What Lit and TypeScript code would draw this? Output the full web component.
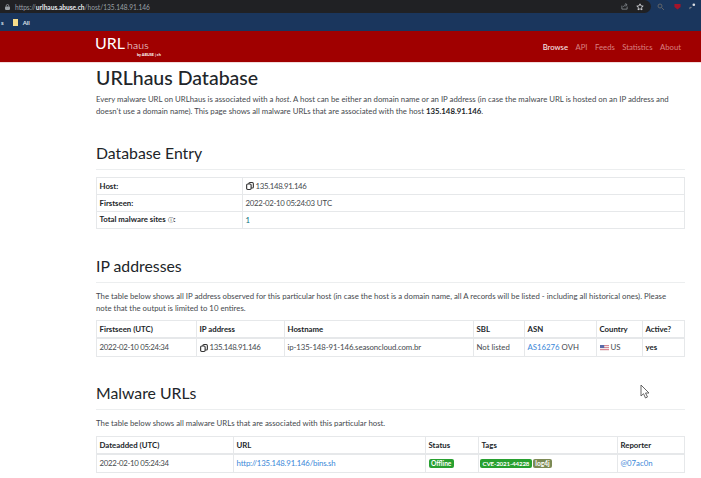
import { LitElement, html, css, svg } from 'lit';
import { customElement } from 'lit/decorators.js';

const copyIcon = html`<svg class="copy" viewBox="0 0 10 10" width="8" height="8">
  <rect x="3.6" y="0.7" width="5.6" height="6.8" rx="1.4" fill="none" stroke="#333" stroke-width="1.4"></rect>
  <rect x="0.8" y="2.5" width="5.6" height="6.8" rx="1.4" fill="#fff" stroke="#333" stroke-width="1.4"></rect>
</svg>`;

const flag = html`<svg class="flag" viewBox="0 0 9 6" width="9" height="6">
  <rect width="9" height="6" fill="#d98a94"></rect>
  ${[1, 3, 5].map((y) => svg`<rect y=${y} width="9" height="1" fill="#f1e6e8"></rect>`)}
  <rect width="4.2" height="3" fill="#5a6aa8"></rect>
</svg>`;

@customElement('app-root')
export class AppRoot extends LitElement {
  static styles = css`
    :host {
      display: block;
      height: 478px;
      overflow: hidden;
      position: relative;
      background: #fff;
      font-family: "Lato", "Open Sans", sans-serif;
      font-size: 7.8px;
      color: #45494e;
    }
    .top { height: 31px; background: #1a365d; }
    .toolbar { height: 13px; display: flex; align-items: center; }
    .omnibox {
      width: 651px;
      height: 13px;
      flex: none;
      box-sizing: border-box;
      background: #202124;
      border-radius: 0 7px 7px 0;
      display: flex;
      align-items: center;
      padding: 0 4px 0 5px;
      color: #9aa0a6;
      font-size: 6.6px;
    }
    .lock { margin-right: 5px; }
    .omnibox b { color: #e8eaed; font-weight: 700; }
    .page-tools { margin-left: auto; display: flex; align-items: center; gap: 8px; padding-right: 3px; }
    .ext-tools { flex: 1; display: flex; align-items: center; justify-content: space-between; padding: 0 5px 0 6px; }
    .bookmarks {
      height: 18px;
      display: flex;
      align-items: center;
      color: #dfe5ee;
      font-size: 6px;
      font-weight: 700;
      padding-left: 1px;
    }
    .bookmarks .folder { width: 5px; height: 7px; background: #f6dd8a; margin: 0 5px 0 9px; }
    .nav {
      height: 32px;
      background: #a00000;
      padding: 0 20px 0 95px;
      display: flex;
      align-items: center;
      border-bottom: 1px solid #f2dcdc;
      box-sizing: border-box;
    }
    .logo { color: #fff; line-height: 1; position: relative; width: 80px; height: 24px; }
    .logo .url { font-size: 16px; font-weight: 400; }
    .logo .haus { font-size: 10.5px; font-weight: 300; margin-left: 2px; letter-spacing: 0.2px; }
    .logo .by { position: absolute; left: 42px; top: 18px; font-size: 3.8px; font-weight: 700; white-space: nowrap; }
    .menu { margin-left: auto; display: flex; gap: 7.5px; font-size: 7.7px; color: #d98080; }
    .menu .on { color: #f6e4e4; font-weight: 500; }
    .main { padding: 3px 16px 0 96px; }
    h1 { font-size: 19.5px; font-weight: 500; color: #212529; margin: 0; line-height: 24px; }
    p { margin: 0; line-height: 12.4px; }
    .intro { margin-top: 3px; }
    p b { font-weight: 700; color: #212529; }
    h2 {
      font-size: 15.8px;
      font-weight: 400;
      color: #212529;
      margin: 0;
      line-height: 20px;
      padding-bottom: 6px;
      border-bottom: 1px solid #eceeef;
    }
    .sec-a { margin-top: 25px; }
    .sec-b { margin-top: 27px; }
    .sec-c { margin-top: 26px; }
    table { width: 589px; border-collapse: collapse; table-layout: fixed; }
    td, th {
      border: 1px solid #e6e8ea;
      padding: 0 2.5px;
      height: 16px;
      text-align: left;
      white-space: nowrap;
      overflow: hidden;
      font-size: 7.8px;
    }
    th { font-weight: 700; color: #212529; }
    thead th { border-bottom-width: 2px; }
    .list tbody td { height: 17px; }
    .entry { margin-top: 7px; }
    .sec-p { margin-top: 7px; }
    .list { margin-top: 5px; }
    .list-b { margin-top: 6.5px; }
    a { color: #3b87d8; text-decoration: none; }
    .teal { color: #0c6f7c; }
    .num { letter-spacing: -0.3px; }
    .hostname { letter-spacing: -0.1px; }
    .url-link { letter-spacing: -0.17px; }
    .info { font-size: 6.4px; font-weight: 400; }
    .copy { vertical-align: -1.5px; }
    .flag { vertical-align: -0.5px; }
    .yes { font-weight: 700; color: #212529; }
    .badge {
      display: inline-block;
      color: #fff;
      font-size: 6.6px;
      font-weight: 700;
      line-height: 9px;
      padding: 0 2.5px;
      border-radius: 2px;
      background: #28a030;
      vertical-align: 0;
    }
    .badge.cve { font-size: 6.2px; letter-spacing: -0.15px; margin-left: -1.5px; }
    .badge.log { background: #7c8a55; margin-left: 1px; }
    .cursor { position: absolute; left: 640px; top: 384px; }
  `;

  render() {
    return html`
      <div class="top">
        <div class="toolbar">
          <div class="omnibox">
            <svg class="lock" viewBox="0 0 6 7" width="5" height="6"><rect y="3" width="6" height="4" rx="1" fill="#9aa0a6"></rect><path d="M1.5 3V2a1.5 1.5 0 0 1 3 0v1" fill="none" stroke="#9aa0a6"></path></svg>
            <span>https://<b>urlhaus.abuse.ch</b>/host/135.148.91.146</span>
            <span class="page-tools">
              <svg viewBox="0 0 8 8" width="7" height="7"><path d="M1 3v4h6V4M3 4.500c0-2 2-2.500 3-2.500M5 .5 7 2 5 3.500" fill="none" stroke="#9aa0a6" stroke-width=".8"></path></svg>
              <svg viewBox="0 0 10 10" width="8" height="8"><path d="M5 1l1.200 2.600 2.800.3-2.100 1.900.6 2.800L5 7.200 2.500 8.600l.6-2.800L1 3.900l2.800-.3z" fill="none" stroke="#e8eaed"></path></svg>
            </span>
          </div>
          <div class="ext-tools">
            <svg viewBox="0 0 8 8" width="8" height="8"><circle cx="3" cy="3" r="2" fill="none" stroke="#5f6368"></circle><path d="M4.500 4.500 7 7" stroke="#5f6368"></path></svg>
            <svg viewBox="0 0 8 8" width="7" height="7"><path d="M.5 1h7v3.500L4 7.500.5 4.500z" fill="#a3142a"></path></svg>
            <svg viewBox="0 0 8 8" width="7" height="7"><circle cx="5.500" cy="2" r="1.500" fill="#dfe1e5"></circle><path d="M1 7V5h2" fill="none" stroke="#8a8d91"></path></svg>
          </div>
        </div>
        <div class="bookmarks">s<span class="folder"></span>All</div>
      </div>
      <div class="nav">
        <div class="logo">
          <span class="url">URL</span><span class="haus">haus</span>
          <span class="by">by ABUSE | ch</span>
        </div>
        <div class="menu">
          <span class="on">Browse</span><span>API</span><span>Feeds</span><span>Statistics</span><span>About</span>
        </div>
      </div>
      <div class="main">
        <h1>URLhaus Database</h1>
        <p class="intro">Every malware URL on URLhaus is associated with a <i>host</i>. A host can be either an domain name or an IP address (in case the malware URL is hosted on an IP address and doesn't use a domain name). This page shows all malware URLs that are associated with the host <b>135.148.91.146</b>.</p>

        <h2 class="sec-a">Database Entry</h2>
        <table class="entry">
          <colgroup><col style="width:146px" /><col /></colgroup>
          <tbody>
            <tr><th>Host:</th><td>${copyIcon} <span class="num">135.148.91.146</span></td></tr>
            <tr><th>Firstseen:</th><td><span class="num">2022-02-10 05:24:03</span> UTC</td></tr>
            <tr><th>Total malware sites <span class="info">ⓘ</span>:</th><td class="teal">1</td></tr>
          </tbody>
        </table>

        <h2 class="sec-b">IP addresses</h2>
        <p class="sec-p">The table below shows all IP address observed for this particular host (in case the host is a domain name, all A records will be listed - including all historical ones). Please<br />note that the output is limited to 10 entires.</p>
        <table class="list">
          <colgroup>
            <col style="width:100px" /><col style="width:88px" /><col style="width:189px" /><col style="width:51px" /><col style="width:72px" /><col style="width:46px" /><col />
          </colgroup>
          <thead><tr><th>Firstseen (UTC)</th><th>IP address</th><th>Hostname</th><th>SBL</th><th>ASN</th><th>Country</th><th>Active?</th></tr></thead>
          <tbody><tr>
            <td class="num">2022-02-10 05:24:34</td><td>${copyIcon} <span class="num">135.148.91.146</span></td><td class="hostname">ip-135-148-91-146.seasoncloud.com.br</td><td>Not listed</td><td><a>AS16276</a> OVH</td><td>${flag} US</td><td class="yes">yes</td>
          </tr></tbody>
        </table>

        <h2 class="sec-c">Malware URLs</h2>
        <p class="sec-p">The table below shows all malware URLs that are associated with this particular host.</p>
        <table class="list list-b">
          <colgroup>
            <col style="width:137px" /><col style="width:192px" /><col style="width:53px" /><col style="width:139px" /><col />
          </colgroup>
          <thead><tr><th>Dateadded (UTC)</th><th>URL</th><th>Status</th><th>Tags</th><th>Reporter</th></tr></thead>
          <tbody><tr>
            <td class="num">2022-02-10 05:24:34</td><td><a class="url-link">http://135.148.91.146/bins.sh</a></td><td><span class="badge">Offline</span></td><td><span class="badge cve">CVE-2021-44228</span><span class="badge log">log4j</span></td><td><a>@07ac0n</a></td>
          </tr></tbody>
        </table>
      </div>
      <svg class="cursor" viewBox="0 0 10 15" width="10" height="15"><path d="M1 1v11l2.500-2.300L5.500 14l2-1-2-4H9z" fill="#fff" stroke="#555" stroke-width=".9"></path></svg>
    `;
  }
}
